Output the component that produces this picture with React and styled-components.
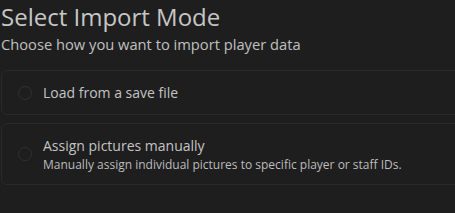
import React from 'react';
import styled, { createGlobalStyle } from 'styled-components';

const Global = createGlobalStyle`
    html, body {
        margin : 0;
        background : #1e1e1e;
        overflow : hidden;
    }
    body {
        font-family : "Open Sans", "Noto Sans", sans-serif;
        color : #c4c4c4;
    }
`

const options = [
    { title : 'Load from a save file' },
    { title : 'Assign pictures manually', description : 'Manually assign individual pictures to specific player or staff IDs.' },
];

const App = () => {
    return (
        <>
            <Global />
            <Wrap>
                <Title>Select Import Mode</Title>
                <Subtitle>Choose how you want to import player data</Subtitle>

                <List>
                    {options.map(option => (
                        <Card key={option.title} $tall={!!option.description}>
                            <Radio />
                            <TextBlock>
                                <OptionTitle>{option.title}</OptionTitle>
                                {option.description &&
                                    <OptionText>{option.description}</OptionText>
                                }
                            </TextBlock>
                        </Card>
                    ))}
                </List>
            </Wrap>
        </>
    );
};

export default App;

const Wrap = styled.div`
    width : 455px;
    padding : 2px 0 0 1px;
    box-sizing : border-box;
`

const Title = styled.h1`
    margin : 0;
    font-size : 24px;
    font-weight : 400;
    line-height : 30px;
    color : #c6c6c6;
`

const Subtitle = styled.p`
    margin : 2px 0 0 0;
    font-size : 14.7px;
    line-height : 20px;
    color : #c0c0c0;
`

const List = styled.div`
    display : flex;
    flex-direction : column;
    gap : 8px;
    margin-top : 16px;
    margin-right : -30px;
`

const Card = styled.div`
    display : flex;
    align-items : center;
    gap : 11px;
    height : ${props => props.$tall ? '62px' : '45px'};
    box-sizing : border-box;
    padding : 0 0 0 16px;
    border : 1px solid #2a2a2a;
    border-radius : 6px;
    background : #1e1e1e;
`

const Radio = styled.div`
    width : 12px;
    height : 12px;
    border : 1px solid #303030;
    border-radius : 50%;
    flex-shrink : 0;
`

const TextBlock = styled.div`
    display : flex;
    flex-direction : column;
`

const OptionTitle = styled.div`
    font-size : 14px;
    line-height : 20px;
    color : #c4c4c4;
`

const OptionText = styled.div`
    font-size : 12px;
    line-height : 17px;
    color : #bcbcbc;
`
